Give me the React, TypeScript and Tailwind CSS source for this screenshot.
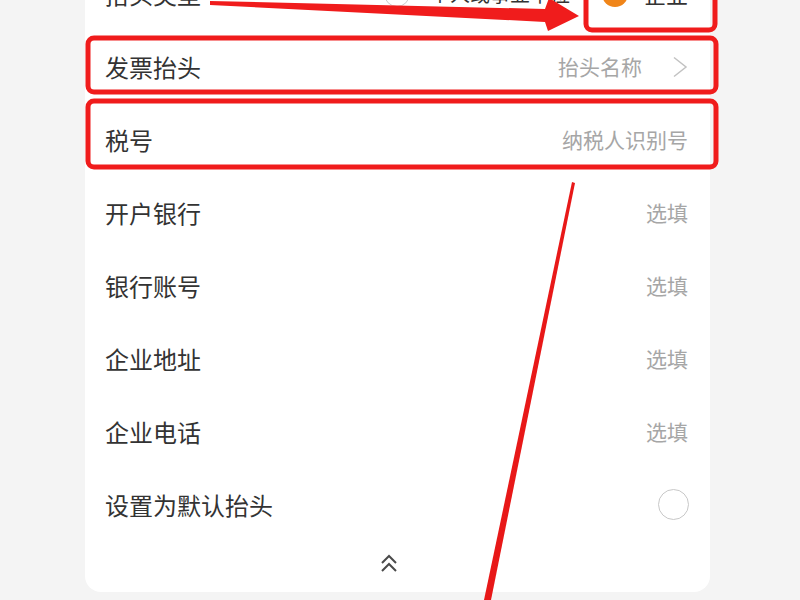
type Row = { label: string; hint?: string; arrow?: boolean };

const rows: Row[] = [
  { label: "发票抬头", hint: "抬头名称", arrow: true },
  { label: "税号", hint: "纳税人识别号" },
  { label: "开户银行", hint: "选填" },
  { label: "银行账号", hint: "选填" },
  { label: "企业地址", hint: "选填" },
  { label: "企业电话", hint: "选填" },
];

function Marks() {
  // red annotation boxes and arrows drawn over the form
  return (
    <svg
      className="pointer-events-none absolute inset-0"
      width="800"
      height="600"
      viewBox="0 0 800 600"
    >
      <g fill="none" stroke="#f01c1c" strokeWidth="5">
        <rect x="88" y="38" width="628" height="54" rx="6" />
        <rect x="88" y="101" width="628" height="66" rx="6" />
        <rect x="586" y="-12" width="129" height="42" rx="6" />
      </g>
      <polygon
        fill="#f01c1c"
        points="210,1 545,9 549,-2 579,16 548,31 545,22 210,5"
      />
      <polygon fill="#e81818" points="572,182 575,183 491,600 484,600" />
    </svg>
  );
}

export default function App() {
  return (
    <div className="relative h-[600px] w-[800px] overflow-hidden bg-[#f4f4f4] font-['Noto_Sans_CJK_SC','Noto_Sans',sans-serif]">
      <div className="ml-[85px] -mt-[43px] w-[625px] rounded-b-[16px] bg-white pl-[20px] pr-[22px]">
        <div className="flex h-[73px] items-center justify-between">
          <span className="text-[24px] text-[#333]">抬头类型</span>
          <div className="flex items-center">
            <span className="h-[26px] w-[26px] rounded-full border-[1.5px] border-[#ccc]" />
            <span className="ml-[20px] text-[20px] text-[#333]">个人或事业单位</span>
            <span className="ml-[32px] h-[26px] w-[26px] rounded-full bg-[#f08519]" />
            <span className="ml-[16px] text-[22px] text-[#333]">企业</span>
          </div>
        </div>
        {rows.map((r) => (
          <div key={r.label} className="flex h-[73px] items-center justify-between">
            <span className="text-[24px] text-[#333]">{r.label}</span>
            <div className="flex items-center">
              <span className="text-[21px] text-[#a6a6a6]">{r.hint}</span>
              {r.arrow && (
                <svg className="ml-[30px]" width="16" height="22" viewBox="0 0 16 22">
                  <polyline
                    points="2,1.5 14,11 2,20.5"
                    fill="none"
                    stroke="#c2c2c2"
                    strokeWidth="1.5"
                  />
                </svg>
              )}
            </div>
          </div>
        ))}
        <div className="flex h-[73px] items-center justify-between">
          <span className="text-[24px] text-[#333]">设置为默认抬头</span>
          <span className="mr-[-1px] h-[31px] w-[31px] rounded-full border-[1.5px] border-[#c8c8c8]" />
        </div>
        <div className="flex h-[51px] items-start justify-center pt-[12px]">
          <svg className="mr-[16px]" width="18" height="20" viewBox="0 0 18 20">
            <g fill="none" stroke="#4a4a4a" strokeWidth="2" strokeLinejoin="miter">
              <polyline points="2,10 9,3 16,10" />
              <polyline points="2,18 9,11 16,18" />
            </g>
          </svg>
        </div>
      </div>
      <Marks />
    </div>
  );
}
